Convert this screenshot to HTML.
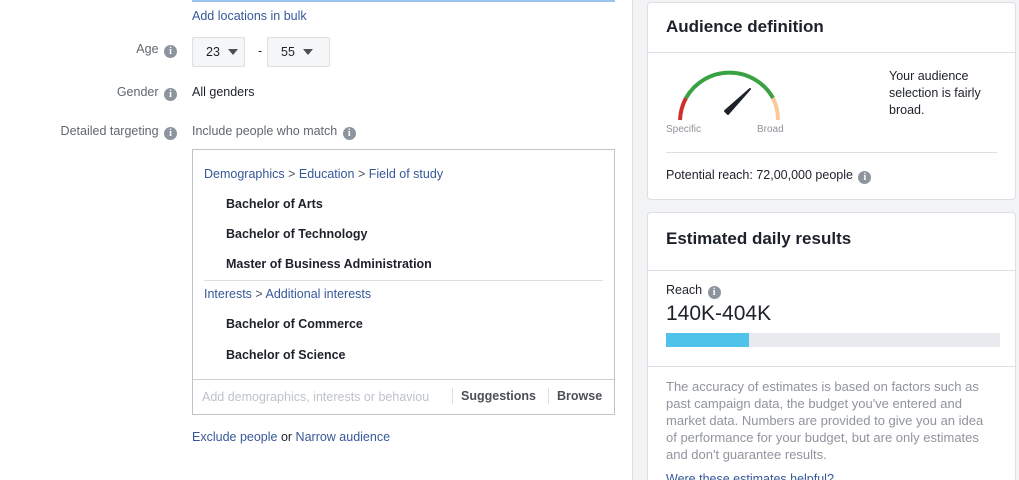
<!DOCTYPE html><html><head><style>
*{margin:0;padding:0;box-sizing:border-box}
html,body{width:1019px;height:480px;overflow:hidden}
body{background:#f2f3f5;font-family:"Liberation Sans",Arial,sans-serif;font-size:12.5px;color:#1d2129;position:relative}
.a{position:absolute}
.left{left:0;top:0;width:633px;height:480px;background:#fff;border-right:1px solid #dddfe2}
.lnk{color:#365899}
.lbl{color:#606770;text-align:right;left:0}
.i{display:inline-block;width:13px;height:13px;border-radius:50%;background:#8d949e;color:#fff;font-size:10px;font-weight:bold;text-align:center;line-height:13px;vertical-align:-1px;margin-left:2px;font-family:"Liberation Serif",serif}
.sel{height:30px;border:1px solid #dddfe2;background:#f5f6f7;border-radius:2px;line-height:28px;padding-left:13px}
.tri{display:inline-block;width:0;height:0;border-left:5px solid transparent;border-right:5px solid transparent;border-top:6px solid #4b4f56;margin-left:8px;vertical-align:1px}
.card{background:#fff;border:1px solid #dddfe2;border-radius:4px;left:647px;width:369px;overflow:hidden}
.it{left:33px;font-weight:bold;color:#1d2129;font-size:12.5px}
</style></head><body>
<div class="a left"></div>
<div class="a" style="left:192px;top:0;width:423px;height:2px;background:#9cc3ed"></div>
<div class="a lnk" style="left:192px;top:9px">Add locations in bulk</div>
<div class="a lbl" style="top:42px;width:177px">Age <span class="i">i</span></div>
<div class="a sel" style="top:37px;width:53px;left:192px">23<span class="tri"></span></div>
<div class="a" style="left:258px;top:44px">-</div>
<div class="a sel" style="left:267px;top:37px;width:63px">55<span class="tri"></span></div>
<div class="a lbl" style="top:85px;width:177px">Gender <span class="i">i</span></div>
<div class="a" style="left:192px;top:85px">All genders</div>
<div class="a lbl" style="top:124px;width:177px">Detailed targeting <span class="i">i</span></div>
<div class="a" style="left:192px;top:124px;color:#606770">Include people who match <span class="i">i</span></div>
<div class="a" style="left:192px;top:149px;width:423px;height:266px;border:1px solid #bec3c9;background:#fff">
 <div class="a lnk" style="left:11px;top:17px">Demographics <span style="color:#4b4f56">&gt;</span> Education <span style="color:#4b4f56">&gt;</span> Field of study</div>
 <div class="a it" style="top:47px">Bachelor of Arts</div>
 <div class="a it" style="top:77px">Bachelor of Technology</div>
 <div class="a it" style="top:107px">Master of Business Administration</div>
 <div class="a" style="left:11px;right:11px;top:130px;border-top:1px solid #dddfe2"></div>
 <div class="a lnk" style="left:11px;top:137px">Interests <span style="color:#4b4f56">&gt;</span> Additional interests</div>
 <div class="a it" style="top:167px">Bachelor of Commerce</div>
 <div class="a it" style="top:198px">Bachelor of Science</div>
 <div class="a" style="left:0;right:0;top:229px;border-top:1px solid #ccd0d5"></div>
 <div class="a" style="left:9px;top:240px;color:#bec3c9">Add demographics, interests or behaviou</div>
 <div class="a" style="left:259px;top:238px;height:16px;border-left:1px solid #dddfe2"></div>
 <div class="a" style="left:268px;top:239px;font-weight:bold;color:#4b4f56">Suggestions</div>
 <div class="a" style="left:355px;top:238px;height:16px;border-left:1px solid #dddfe2"></div>
 <div class="a" style="left:364px;top:239px;font-weight:bold;color:#4b4f56">Browse</div>
</div>
<div class="a" style="left:192px;top:430px"><span class="lnk">Exclude people</span> or <span class="lnk">Narrow audience</span></div>

<div class="a card" style="top:2px;height:198px">
 <div class="a" style="left:18px;top:14px;font-size:17px;font-weight:bold">Audience definition</div>
 <div class="a" style="left:0;right:0;top:49px;border-top:1px solid #dddfe2"></div>
 <svg class="a" style="left:22px;top:60px" width="120" height="60" viewBox="0 0 120 60">
  <path d="M10 57 A50 50 0 0 1 16 35" stroke="#d0312d" stroke-width="4" fill="none"/>
  <path d="M16 35 A50 50 0 0 1 103 35" stroke="#3aa142" stroke-width="4" fill="none"/>
  <path d="M103 35 A50 50 0 0 1 108 57" stroke="#fbc998" stroke-width="4" fill="none"/>
  <path d="M55 48 L80 26 L58 51 Z" fill="#1d2129" stroke="#1d2129" stroke-width="2" stroke-linejoin="round"/>
 </svg>
 <div class="a" style="left:18px;top:121px;font-size:10px;color:#90949c">Specific</div>
 <div class="a" style="left:109px;top:121px;font-size:10px;color:#90949c">Broad</div>
 <div class="a" style="left:241px;top:65px;line-height:17px;color:#1d2129">Your audience<br>selection is fairly<br>broad.</div>
 <div class="a" style="left:18px;right:18px;top:149px;border-top:1px solid #dddfe2"></div>
 <div class="a" style="left:18px;top:165px">Potential reach: 72,00,000 people <span class="i">i</span></div>
</div>
<div class="a card" style="top:212px;height:268px;border-bottom:none;border-radius:4px 4px 0 0">
 <div class="a" style="left:18px;top:16px;font-size:17px;font-weight:bold">Estimated daily results</div>
 <div class="a" style="left:0;right:0;top:57px;border-top:1px solid #dddfe2"></div>
 <div class="a" style="left:18px;top:70px">Reach <span class="i">i</span></div>
 <div class="a" style="left:18px;top:89px;font-size:21px">140K-404K</div>
 <div class="a" style="left:18px;top:120px;width:334px;height:14px;background:#e9eaed"><div style="width:83px;height:14px;background:#4fc3ea"></div></div>
 <div class="a" style="left:0;right:0;top:153px;border-top:1px solid #dddfe2"></div>
 <div class="a" style="left:18px;top:165px;width:330px;line-height:17px;font-size:13px;color:#90949c">The accuracy of estimates is based on factors such as past campaign data, the budget you've entered and market data. Numbers are provided to give you an idea of performance for your budget, but are only estimates and don't guarantee results.</div>
 <div class="a lnk" style="left:18px;top:259px">Were these estimates helpful?</div>
</div>
</body></html>
